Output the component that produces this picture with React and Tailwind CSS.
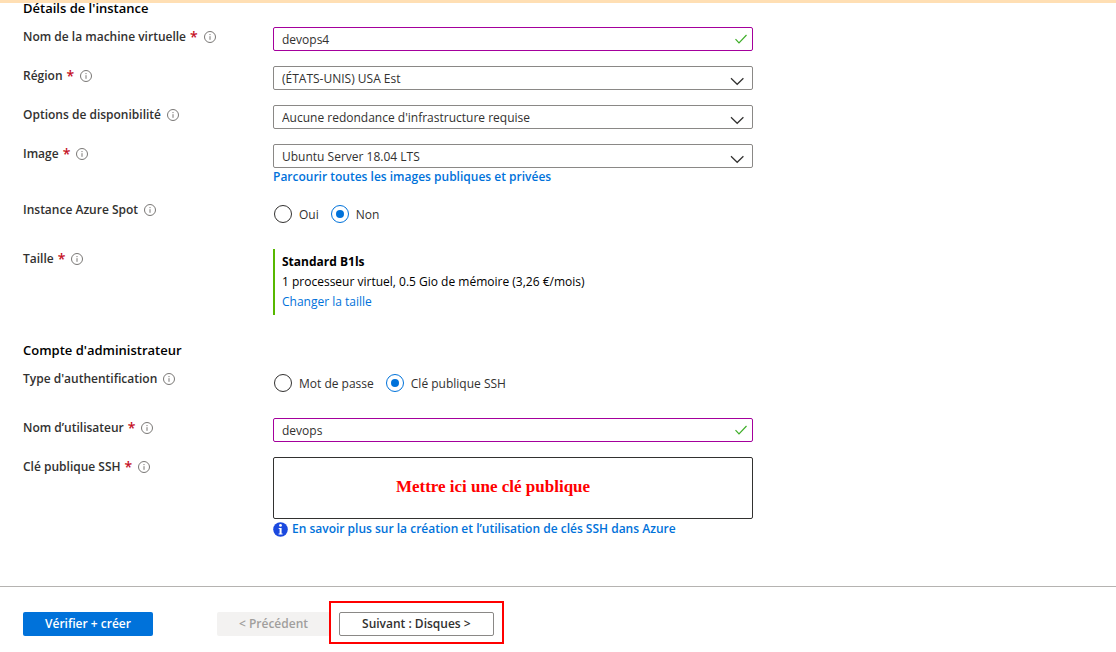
import React from 'react';

function InfoIcon() {
  return (
    <svg className="ml-0.5 size-3 shrink-0" viewBox="0 0 12 12" fill="none" aria-hidden="true">
      <circle cx="6" cy="6" r="5.5" stroke="#797775" />
      <path d="M6 5.2v3.6" stroke="#797775" />
      <circle cx="6" cy="3.6" r="0.65" fill="#797775" />
    </svg>
  );
}

function Row({ label, htmlFor, required, children }) {
  const Label = htmlFor ? 'label' : 'div';
  return (
    <div className="flex items-start">
      <Label
        htmlFor={htmlFor}
        className="flex w-[250px] shrink-0 items-center gap-1 text-xs leading-5 font-semibold text-[#323130]"
      >
        {label}
        {required && <span className="text-sm leading-5 text-[#c50f1f]">*</span>}
        <InfoIcon />
      </Label>
      <div className="max-w-[480px] flex-1">{children}</div>
    </div>
  );
}

function TextField({ id, value }) {
  return (
    <div className="relative">
      <input
        id={id}
        type="text"
        defaultValue={value}
        className="block h-6 w-full rounded-xs border border-[#a4009c] bg-white pr-7 pl-2 text-[#323130] outline-none"
      />
      <svg className="absolute top-1.5 right-1.5 size-3" viewBox="0 0 12 12" fill="none" aria-hidden="true">
        <path d="M0.5 6.2 4 9.8 11.5 2" stroke="#3fae29" strokeWidth="1.2" />
      </svg>
    </div>
  );
}

function SelectField({ id, value }) {
  return (
    <div className="relative">
      <select
        id={id}
        className="block h-6 w-full appearance-none rounded-xs border border-[#8a8886] bg-white pt-px pr-8 pl-2 text-[#323130] outline-none"
      >
        <option>{value}</option>
      </select>
      <svg className="pointer-events-none absolute top-2 right-2 h-3 w-4" viewBox="0 0 16 12" fill="none" aria-hidden="true">
        <path d="M2 4.2 8.2 10.3 14.4 4.2" stroke="#323130" strokeWidth="1.2" />
      </svg>
    </div>
  );
}

function RadioGroup({ name, label, options, selected }) {
  return (
    <div role="radiogroup" aria-label={label} className="flex h-[34px] items-start gap-3 px-px pt-[5px]">
      {options.map((option) => (
        <label key={option} className="flex items-start gap-[7px] text-[#323130]">
          <input
            type="radio"
            name={name}
            defaultChecked={option === selected}
            className="grid size-[18px] shrink-0 appearance-none place-items-center rounded-full border border-[#323130] before:size-2 before:rounded-full checked:border-[#0072da] checked:before:bg-[#0072da]"
          />
          <span className="leading-5">{option}</span>
        </label>
      ))}
    </div>
  );
}

export default function App() {
  return (
    <div className="bg-white font-['Open_Sans',sans-serif] text-xs leading-5 text-black">
      <div className="h-[3px] bg-[#ffdfb4]" />
      <form onSubmit={(e) => e.preventDefault()}>
        <section className="flex flex-col gap-[15px] px-[23px]">
          <h2 className="-mb-[6px] h-[15px] text-[13px] leading-[11px] font-semibold">Détails de l'instance</h2>
          <Row label="Nom de la machine virtuelle" htmlFor="vm-name" required>
            <TextField id="vm-name" value="devops4" />
          </Row>
          <Row label="Région" htmlFor="region" required>
            <SelectField id="region" value="(ÉTATS-UNIS) USA Est" />
          </Row>
          <Row label="Options de disponibilité" htmlFor="availability">
            <SelectField id="availability" value="Aucune redondance d'infrastructure requise" />
          </Row>
          <Row label="Image" htmlFor="image" required>
            <SelectField id="image" value="Ubuntu Server 18.04 LTS" />
            <a href="#images" className="block pt-px leading-4 font-semibold text-[#0072da]">
              Parcourir toutes les images publiques et privées
            </a>
          </Row>
          <Row label="Instance Azure Spot">
            <RadioGroup name="spot" label="Instance Azure Spot" options={['Oui', 'Non']} selected="Non" />
          </Row>
          <Row label="Taille" required>
            <div className="h-[66px] border-l-2 border-[#57b800] pt-[3px] pl-[7px]">
              <p className="font-bold">Standard B1ls</p>
              <p>1 processeur virtuel, 0.5 Gio de mémoire (3,26 €/mois)</p>
              <a href="#size" className="block text-[#0072da]">Changer la taille</a>
            </div>
          </Row>
        </section>

        <section className="mt-[25px] flex flex-col gap-[15px] px-[23px]">
          <h2 className="-mb-[6px] h-5 text-[13px] font-semibold">Compte d'administrateur</h2>
          <Row label="Type d'authentification">
            <RadioGroup
              name="auth"
              label="Type d'authentification"
              options={['Mot de passe', 'Clé publique SSH']}
              selected="Clé publique SSH"
            />
          </Row>
          <Row label="Nom d’utilisateur" htmlFor="user" required>
            <TextField id="user" value="devops" />
          </Row>
          <Row label="Clé publique SSH" htmlFor="ssh-key" required>
            <textarea
              id="ssh-key"
              defaultValue="Mettre ici une clé publique"
              className="block h-[62px] w-full resize-none rounded-xs border border-[#323130] px-2 pt-[19px] pr-12 text-center font-['Liberation_Serif',serif] text-[17px] leading-5 font-bold text-[#ff0000] outline-none"
            />
            <a href="#ssh" className="flex items-center gap-1 font-semibold text-[#0072da]">
              <svg className="size-[15px] shrink-0" viewBox="0 0 15 15" aria-hidden="true">
                <circle cx="7.5" cy="7.5" r="7.3" fill="#1b49df" />
                <circle cx="7.5" cy="3.4" r="1.4" fill="#fff" />
                <path d="M5.7 5.9h2.9v5.5h1v1H5.6v-1h1V6.9h-.9z" fill="#fff" />
              </svg>
              En savoir plus sur la création et l’utilisation de clés SSH dans Azure
            </a>
          </Row>
        </section>

        <footer className="mt-[47px] flex items-center border-t border-[#b5b3b1] px-[23px] py-[25px] font-semibold">
          <button type="submit" className="h-6 rounded-xs bg-[#0072da] px-[22px] leading-5 text-white">
            Vérifier + créer
          </button>
          <button type="button" disabled className="ml-16 h-6 rounded-xs bg-[#f3f2f1] px-[22px] leading-5 text-[#a19f9d]">
            &lt; Précédent
          </button>
          <div className="relative ml-[9px]">
            <div className="pointer-events-none absolute -inset-x-[10px] -top-[11px] -bottom-2 border-2 border-[#ff0000]" />
            <button type="button" className="block h-6 rounded-xs border border-[#8a8886] bg-white px-[22px] leading-5 text-[#323130]">
              Suivant : Disques &gt;
            </button>
          </div>
        </footer>
      </form>
    </div>
  );
}
